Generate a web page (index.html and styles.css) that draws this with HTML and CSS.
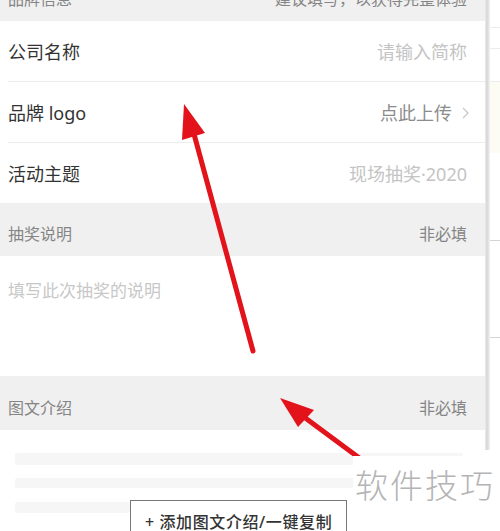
FILE: index.html
```html
<!DOCTYPE html>
<html lang="zh-CN">
<head>
<meta charset="utf-8">
<link rel="stylesheet" href="styles.css">
</head>
<body>
<div class="page">
  <div class="card">
    <div class="section">
      <span>品牌信息</span>
      <span>建议填写，以获得完整体验</span>
    </div>
    <div class="row">
      <span class="label">公司名称</span>
      <span class="ph">请输入简称</span>
    </div>
    <div class="row">
      <span class="label">品牌 logo</span>
      <span class="value">点此上传<svg class="chev" width="7" height="12" viewBox="0 0 7 12"><path d="M1 1l5 5-5 5" fill="none" stroke="#c8c8c8" stroke-width="1.3"/></svg></span>
    </div>
    <div class="row last">
      <span class="label">活动主题</span>
      <span class="ph">现场抽奖·2020</span>
    </div>
    <div class="section">
      <span>抽奖说明</span>
      <span>非必填</span>
    </div>
    <div class="textarea">填写此次抽奖的说明</div>
    <div class="section tall">
      <span>图文介绍</span>
      <span>非必填</span>
    </div>
    <div class="bottom">
      <div class="bar bar1"></div>
      <div class="bar bar2"></div>
      <div class="btnrow">
        <div class="bar bar3"></div>
        <div class="btn">+ 添加图文介绍/一键复制</div>
      </div>
    </div>
  </div>
  <div class="side">
    <div class="shade"></div>
    <div class="lines">
      <div class="gap g1"></div>
      <div class="ln"></div>
      <div class="gap g2"></div>
      <div class="ln"></div>
      <div class="gap g3"></div>
      <div class="ln"></div>
      <div class="band"></div>
      <div class="gap g4"></div>
      <div class="ln dark"></div>
      <div class="gap g5"></div>
      <div class="ln dark"></div>
    </div>
  </div>
</div>
<svg class="arrows" width="500" height="531" viewBox="0 0 500 531">
  <line x1="253" y1="351" x2="194" y2="134" stroke="#e3131b" stroke-width="5" stroke-linecap="round"/>
  <polygon points="184,104 182,140 205,133" fill="#e3131b"/>
  <line x1="362" y1="460" x2="304" y2="417" stroke="#e3131b" stroke-width="5" stroke-linecap="round"/>
  <polygon points="280,398 314,410 298,427" fill="#e3131b"/>
</svg>
<div class="watermark">软件技巧</div>
</body>
</html>
```
FILE: styles.css
```css
html, body {
  margin: 0;
  padding: 0;
}
body {
  width: 500px;
  height: 531px;
  overflow: hidden;
  position: relative;
  background: #fff;
  font-family: "Noto Sans", "Noto Sans CJK SC", sans-serif;
}
.page {
  display: grid;
  grid-template-columns: 485px 15px;
  align-items: start;
}
.card {
  margin-top: -32px;
  display: flex;
  flex-direction: column;
  background: #fff;
}
.section {
  height: 53px;
  box-sizing: border-box;
  padding: 9px 18px 0 8px;
  background: #f0f0f0;
  display: flex;
  justify-content: space-between;
  align-items: center;
  font-size: 16px;
  line-height: 20px;
  color: #858585;
}
.section.tall {
  height: 54px;
}
.row {
  height: 61px;
  box-sizing: border-box;
  margin-left: 8px;
  padding-right: 18px;
  border-bottom: 1px solid #ececec;
  display: flex;
  justify-content: space-between;
  align-items: center;
  font-size: 18px;
  line-height: 24px;
  padding-top: 2px;
}
.row.last {
  height: 60px;
  border-bottom: none;
}
.label {
  color: #333;
}
.ph {
  color: #c4c4c4;
}
.value {
  color: #8c8c8c;
  display: flex;
  align-items: center;
  margin-right: -2px;
}
.chev {
  margin-left: 10px;
}
.textarea {
  height: 120px;
  box-sizing: border-box;
  padding: 23px 8px 0;
  font-size: 17px;
  line-height: 24px;
  color: #c8c8c8;
}
.bottom {
  height: 110px;
  padding-top: 23px;
  box-sizing: border-box;
  display: flex;
  flex-direction: column;
}
.bar {
  background: #f6f6f6;
  border-radius: 2px;
}
.bar1 {
  height: 12px;
  margin: 0 22px 0 15px;
}
.bar2 {
  height: 10px;
  margin: 13px 22px 0 15px;
}
.btnrow {
  display: flex;
  align-items: flex-start;
  margin-top: 12px;
}
.bar3 {
  width: 115px;
  height: 11px;
  margin: 2px 0 0 15px;
}
.btn {
  width: 217px;
  height: 40px;
  box-sizing: border-box;
  border: 1px solid #777;
  background: #fff;
  padding: 9px 0 0 14px;
  font-size: 16px;
  line-height: 24px;
  font-weight: 500;
  letter-spacing: 0.6px;
  color: #333;
}
.side {
  display: flex;
  height: 531px;
}
.shade {
  width: 5px;
  height: 450px;
  background: linear-gradient(to right, #ececec, #d6d6d6 40%, #e4e4e4 70%, #f6f6f6);
}
.lines {
  flex: 1;
  display: flex;
  flex-direction: column;
}
.gap.g1 { height: 27px; }
.gap.g2 { height: 20px; }
.gap.g3 { height: 32px; }
.band { height: 71px; background: #fcfcf4; }
.gap.g4 { height: 87px; }
.gap.g5 { height: 96px; }
.ln { height: 1px; background: #ececec; }
.ln.dark { background: #d4d4d4; }
.arrows {
  position: absolute;
  left: 0;
  top: 0;
}
.watermark {
  position: absolute;
  right: 0;
  bottom: 0;
  width: 147px;
  height: 75px;
  box-sizing: border-box;
  padding: 6px 0 0 2px;
  background: #fff;
  font-family: "Noto Sans CJK SC", sans-serif;
  font-size: 33px;
  line-height: 44px;
  font-weight: 300;
  letter-spacing: 2px;
  color: #b4b4b4;
}
```
